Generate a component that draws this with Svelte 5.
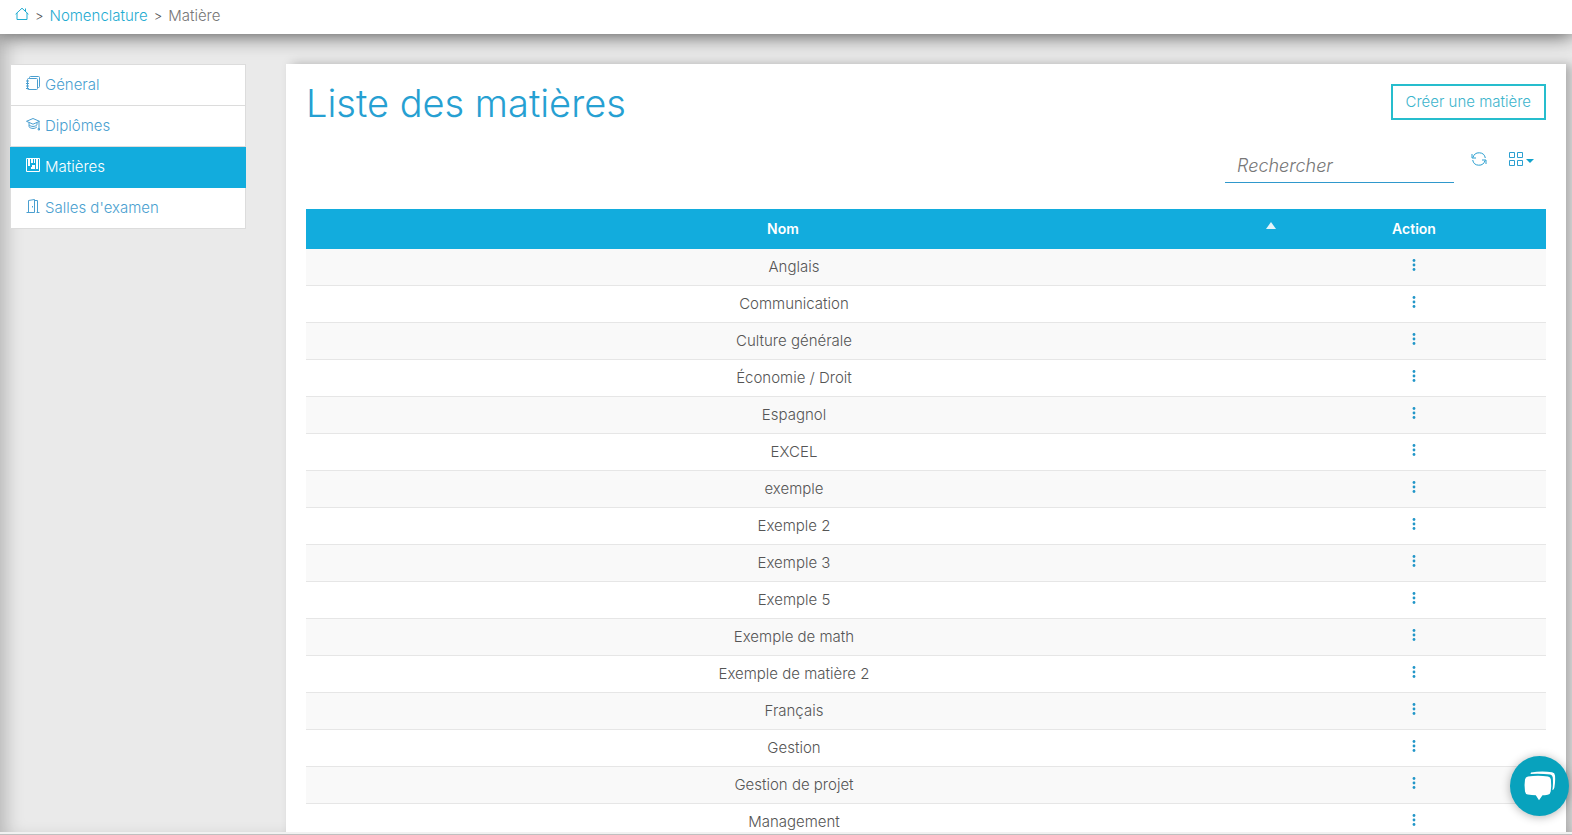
<script>
  const nav = [
    { label: 'Géneral', icon: 'notebook' },
    { label: 'Diplômes', icon: 'cap' },
    { label: 'Matières', icon: 'board', active: true },
    { label: "Salles d'examen", icon: 'door' }
  ];

  const subjects = [
    'Anglais', 'Communication', 'Culture générale', 'Économie / Droit',
    'Espagnol', 'EXCEL', 'exemple', 'Exemple 2', 'Exemple 3', 'Exemple 5',
    'Exemple de math', 'Exemple de matière 2', 'Français', 'Gestion',
    'Gestion de projet', 'Management'
  ];

  let query = $state('');
  const rows = $derived(
    subjects.filter((s) => s.toLowerCase().includes(query.toLowerCase()))
  );
</script>

<div class="app">
  <nav class="breadcrumb" aria-label="Fil d'Ariane">
    <a href="#accueil" aria-label="Accueil">
      <svg class="home" viewBox="0 0 14 14" aria-hidden="true">
        <path d="M.6 7.2 7 1.2l6.4 6M2 6v6.5h10V6M10.5 4V1.5" />
      </svg>
    </a>
    <span class="sep">&gt;</span>
    <a href="#nomenclature">Nomenclature</a>
    <span class="sep">&gt;</span>
    <span class="current">Matière</span>
  </nav>

  <div class="body">
    <aside>
      <ul class="menu">
        {#each nav as item}
          <li>
            <a href="#{item.icon}" class:active={item.active}>
              <svg viewBox="0 0 14 14" aria-hidden="true">
                {#if item.icon === 'notebook'}
                  <path d="M3.5 2.5h7q1 0 1 1v9q0 1-1 1h-8q-1 0-1-1v-9q0-1 1-1h1M3.5 2.5v-1q0-1 1-1h8q1 0 1 1v9q0 1-1 1h-1M0 5h3M0 7.5h3M0 10h3M0 12.5h3" />
                {:else if item.icon === 'cap'}
                  <path d="M.5 4.3 7 1.5l6.5 2.8L7 7.2zM3 5.5v2.3c2 2.2 6 2.2 8 0V5.5M3 7.8v2c2 2.2 6 2.2 8 0M13 4.5v7M12.2 11.5h1.3v1.5h-1.3z" />
                {:else if item.icon === 'board'}
                  <path d="M.5.5h13v13H.5z" />
                  <path class="solid" d="M2 1h2v7H2zM5 1h2v4H5zM8 1h1v4H8zM10 1h2v10h-2zM6 7h3v4H5V9h1z" />
                {:else}
                  <path d="M.5 13.5h3M10.5 13.5h3M2.5 13.5v-12l6-1v13h-6M8.5 1.5h3v12M6.5 7v1.5" />
                {/if}
              </svg>
              {item.label}
            </a>
          </li>
        {/each}
      </ul>
    </aside>

    <main>
      <header>
        <h1>Liste des matières</h1>
        <button class="create" type="button">Créer une matière</button>
      </header>

      <div class="toolbar">
        <input type="search" placeholder="Rechercher" aria-label="Rechercher" bind:value={query} />
        <button type="button" class="tool" aria-label="Actualiser">
          <svg viewBox="0 0 16 16" aria-hidden="true">
            <path d="M2 6.5A6.3 6.3 0 0 1 14.3 7M14 9.5A6.3 6.3 0 0 1 1.7 9M1 3v4h4M15 13V9h-4" />
          </svg>
        </button>
        <button type="button" class="tool columns" aria-label="Colonnes">
          <svg viewBox="0 0 16 16" aria-hidden="true">
            <path d="M1.5 1.5h5v5h-5zM9.5 1.5h5v5h-5zM1.5 9.5h5v5h-5zM9.5 9.5h5v5h-5z" />
          </svg>
          <i class="caret"></i>
        </button>
      </div>

      <table>
        <thead>
          <tr>
            <th><div class="sortable">Nom<i class="asc"></i></div></th>
            <th class="action">Action</th>
          </tr>
        </thead>
        <tbody>
          {#each rows as row}
            <tr>
              <td>{row}</td>
              <td>
                <button type="button" class="more" aria-label="Actions pour {row}">
                  <svg viewBox="0 0 4 12" aria-hidden="true">
                    <circle cx="2" cy="1.5" r="1.4" />
                    <circle cx="2" cy="6" r="1.4" />
                    <circle cx="2" cy="10.5" r="1.4" />
                  </svg>
                </button>
              </td>
            </tr>
          {/each}
        </tbody>
      </table>
    </main>
  </div>

  <div class="track"></div>

  <button class="chat" type="button" aria-label="Ouvrir la discussion">
    <svg viewBox="0 0 32 30" aria-hidden="true">
      <path d="M7 1.500Q18-.4 28 1.300q2.800.5 3 3.200.5 6-.6 12-.4 2-2 2.800 1-7 .3-13-.3-2.300-2.500-2.800Q17 2.500 6.500 3z" />
      <path d="M4 5.500q10-1.600 20 0 2.600.5 2.900 3 .7 6-.2 12-.4 2.800-3 3.200-3 .5-5.200.6l-3.500 5-3.200-5q-4-.1-8-.7-2.400-.4-2.800-3-1-6.300 0-12.200.4-2.500 3-2.900z" />
    </svg>
  </button>
</div>

<style>
  :global(body) {
    margin: 0;
  }

  .app {
    display: flex;
    flex-direction: column;
    height: 100vh;
    overflow: hidden;
    font-family: Inter, "Open Sans", sans-serif;
    font-size: 15px;
    font-weight: 300;
    line-height: 20px;
    color: #555;
    background: #eaeaea;
  }

  a {
    color: #1facd1;
    text-decoration: none;
  }

  button {
    font: inherit;
    cursor: pointer;
  }

  svg {
    display: block;
    fill: none;
    stroke: currentColor;
  }

  .breadcrumb {
    position: relative;
    z-index: 1;
    flex: none;
    display: flex;
    align-items: center;
    gap: 6px;
    height: 34px;
    box-sizing: border-box;
    padding: 0 15px 2px;
    background: #fff;
    box-shadow: 0 2px 20px rgba(0, 0, 0, 0.6);
  }

  .home {
    width: 14px;
    height: 14px;
    margin-bottom: 4px;
  }

  .sep {
    font-size: 13px;
    color: #555;
  }

  .current {
    color: #777;
  }

  .body {
    flex: 1;
    min-height: 0;
    display: flex;
    align-items: flex-start;
    gap: 40px;
    padding: 30px 6px 0 10px;
    overflow: hidden;
    box-shadow: inset 14px 0 18px -8px rgba(0, 0, 0, 0.22);
  }

  aside {
    flex: none;
    width: 236px;
  }

  .menu {
    margin: 0;
    padding: 0;
    list-style: none;
    background: #fff;
  }

  .menu a {
    display: flex;
    align-items: center;
    gap: 5px;
    height: 41px;
    box-sizing: border-box;
    padding: 0 15px;
    border: 1px solid #dcdcdc;
    border-top: 0;
    color: #4a9fd0;
  }

  .menu li:first-child a {
    height: 42px;
    border-top: 1px solid #dcdcdc;
  }

  .menu svg {
    width: 14px;
    height: 14px;
    margin-bottom: 4px;
  }

  .menu .active {
    border-color: #12acdd;
    background: #12acdd;
    color: #fff;
  }

  .solid {
    fill: currentColor;
    stroke: none;
  }

  main {
    flex: 1;
    min-width: 0;
    padding: 20px;
    background: #fff;
    box-shadow: 6px 0 10px rgba(0, 0, 0, 0.25);
  }

  header {
    display: flex;
    justify-content: space-between;
    align-items: flex-start;
  }

  h1 {
    margin: 0;
    font-size: 38px;
    font-weight: 300;
    line-height: 38px;
    color: #26a0d2;
  }

  .create {
    height: 36px;
    padding: 0 13px;
    border: 2px solid #26bdcd;
    background: #fff;
    color: #3cb4cc;
  }

  .toolbar {
    display: flex;
    justify-content: flex-end;
    margin-top: 26px;
    padding-right: 12px;
  }

  .toolbar input {
    width: 229px;
    height: 35px;
    box-sizing: border-box;
    margin-right: 17px;
    padding: 0 12px;
    border: 0;
    border-bottom: 1px solid #2f98cc;
    background: none;
    font: italic 300 18px/24px Inter, "Open Sans", sans-serif;
    color: #444;
    outline: 0;
  }

  .toolbar input::placeholder {
    color: #777;
    opacity: 1;
  }

  .tool {
    display: flex;
    align-items: center;
    align-self: flex-start;
    gap: 2px;
    height: 22px;
    padding: 0;
    border: 0;
    background: none;
    color: #2b9fd0;
  }

  .tool svg {
    width: 16px;
    height: 16px;
  }

  .columns {
    margin-left: 21px;
  }

  .caret {
    margin-top: 4px;
    border: 4px solid transparent;
    border-top-color: #12a3cc;
    border-bottom: 0;
  }

  table {
    width: 100%;
    margin-top: 26px;
    border-collapse: separate;
    border-spacing: 0;
    table-layout: fixed;
    text-align: center;
  }

  th {
    height: 40px;
    padding: 0;
    background: #12acdd;
    color: #fff;
    font-size: 14px;
    font-weight: 600;
  }

  .action {
    width: 264px;
  }

  .sortable {
    position: relative;
    padding-right: 22px;
  }

  .asc {
    position: absolute;
    top: 3px;
    right: 6px;
    border: 5px solid transparent;
    border-bottom: 7px solid #e3f4fa;
    border-top: 0;
  }

  td {
    height: 36px;
    padding: 0;
    border-bottom: 1px solid #e6e6e6;
  }

  tbody tr:nth-child(odd) {
    background: #f9f9f9;
  }

  .more {
    display: block;
    margin: 0 auto;
    padding: 0 8px 4px;
    border: 0;
    background: none;
    color: #2196c8;
  }

  .more svg {
    width: 4px;
    height: 12px;
    fill: currentColor;
    stroke: none;
  }

  .track {
    flex: none;
    height: 1px;
    border-top: 2px solid #f1f1f1;
    background: #bfbfbf;
  }

  .chat {
    position: fixed;
    right: 3px;
    bottom: 19px;
    z-index: 2;
    display: grid;
    place-items: center;
    width: 59px;
    height: 60px;
    padding: 0;
    border: 0;
    border-radius: 50%;
    background: #08a2bd;
    box-shadow: 0 1px 10px rgba(0, 0, 0, 0.3);
    color: #fff;
  }

  .chat svg {
    width: 32px;
    height: 30px;
    fill: currentColor;
    stroke: none;
  }
</style>
